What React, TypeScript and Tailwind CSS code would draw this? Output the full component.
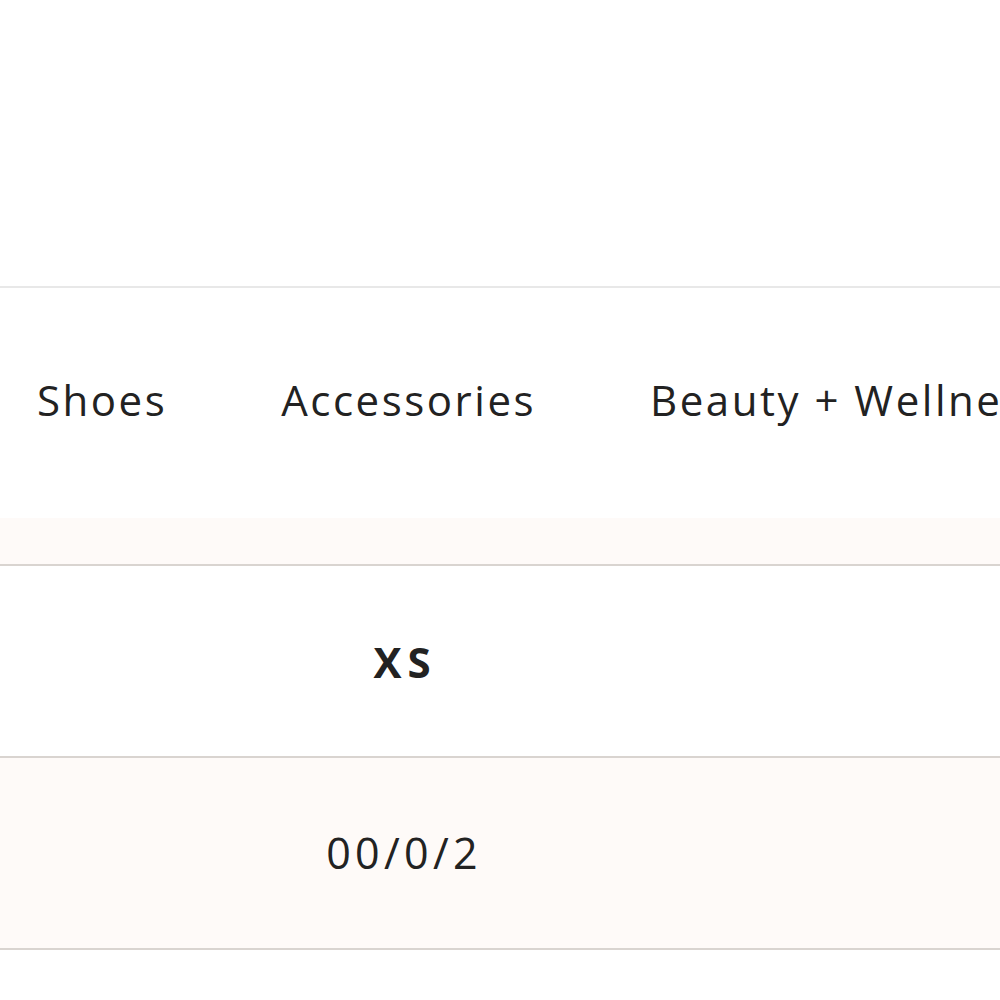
export default function App() {
  const navItems = ["Shoes", "Accessories", "Beauty + Wellness"];

  return (
    <div className="min-h-screen w-full overflow-hidden bg-white text-[#222222]" style={{ fontFamily: '"Open Sans", Lato, sans-serif' }}>
      <header className="h-[286px]" />

      <nav className="flex h-[232px] items-center gap-[114px] whitespace-nowrap border-t-2 border-[#e8e8e8] pb-[8px] pl-[37px] text-[42px] tracking-[0.06em]">
        {navItems.map((item) => (
          <a key={item} href="#" className="shrink-0">
            {item}
          </a>
        ))}
      </nav>

      <div className="h-[46px] bg-[#fefaf8]" />

      <table className="w-full border-collapse">
        <tbody>
          <tr className="h-[192px] border-y-2 border-[#d9d4d0] bg-white">
            <td className="w-[210px]" />
            <td className="w-[384px] pl-[6px] text-center text-[42px] font-bold tracking-[0.14em]">XS</td>
            <td />
          </tr>
          <tr className="h-[192px] border-b-2 border-[#d9d4d0] bg-[#fefaf8]">
            <td />
            <td className="pl-[4px] text-center text-[43px] tracking-[0.1em]">00/0/2</td>
            <td />
          </tr>
        </tbody>
      </table>
    </div>
  );
}
